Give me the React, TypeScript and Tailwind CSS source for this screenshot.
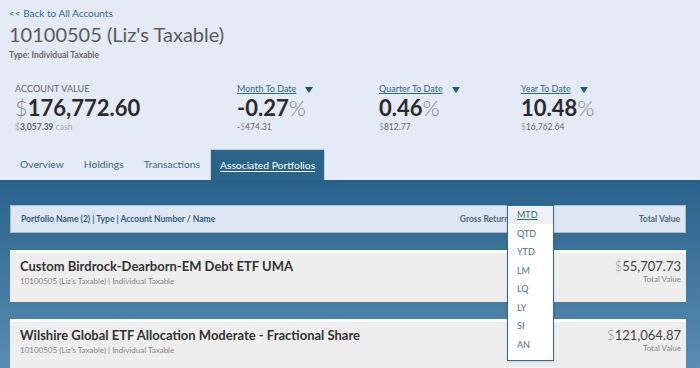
import { useState } from "react";

const periods = ["MTD", "QTD", "YTD", "LM", "LQ", "LY", "SI", "AN"];

const stats = [
  { label: "Month To Date", value: "-0.27", sub: "-$474.31" },
  { label: "Quarter To Date", value: "0.46", sub: "$812.77" },
  { label: "Year To Date", value: "10.48", sub: "$16,762.64" },
];

const portfolios = [
  { name: "Custom Birdrock-Dearborn-EM Debt ETF UMA", value: "55,707.73" },
  { name: "Wilshire Global ETF Allocation Moderate - Fractional Share", value: "121,064.87" },
];

function Caret() {
  return (
    <svg width="8" height="6" viewBox="0 0 8 6" className="ml-[9px] mt-[1px]">
      <path d="M0 0 H8 L4 6 Z" fill="#1f5677" />
    </svg>
  );
}

export default function App() {
  const [tab] = useState("Associated Portfolios");
  const tabs = ["Overview", "Holdings", "Transactions", "Associated Portfolios"];

  return (
    <div className="w-[700px] h-[368px] overflow-hidden bg-[#e4eaf6] font-['Lato',sans-serif] flex flex-col">
      {/* header */}
      <div className="px-[9px] pt-[7px]">
        <a className="text-[10px] text-[#2d6a8e] leading-[12px] block">&lt;&lt; Back to All Accounts</a>
        <h1 className="text-[20px] text-[#5b5b5b] leading-[24px] mt-[3px]">10100505 (Liz's Taxable)</h1>
        <div className="text-[8.5px] font-bold text-[#6b6b6b] mt-[4px] leading-[10px]">Type: Individual Taxable</div>
      </div>

      {/* stats */}
      <div className="flex mt-[24px] pl-[15px]">
        <div className="w-[222px]">
          <div className="text-[9px] text-[#666] leading-[10px] tracking-[0.1px]">ACCOUNT VALUE</div>
          <div className="text-[22px] leading-[26px] mt-[1px] text-[#2b2b2b]">
            <span className="font-light text-[#888]">$</span>
            <span className="font-bold">176,772.60</span>
          </div>
          <div className="text-[8.5px] mt-[1px] leading-[10px]">
            <span className="text-[#aaa]">$</span>
            <span className="font-bold text-[#666]">3,057.39</span>
            <span className="text-[#aaa]"> cash</span>
          </div>
        </div>
        {stats.map((s) => (
          <div key={s.label} className="w-[142px]">
            <div className="flex items-center leading-[10px]">
              <span className="text-[9px] text-[#2d6a8e] underline">{s.label}</span>
              <Caret />
            </div>
            <div className="text-[22px] leading-[26px] mt-[1px] text-[#2b2b2b]">
              <span className="font-bold">{s.value}</span>
              <span className="font-light text-[#888]">%</span>
            </div>
            <div className="text-[8.5px] mt-[1px] leading-[10px] text-[#666]">
              {s.sub.startsWith("-") ? (
                <>-<span className="text-[#aaa]">$</span>{s.sub.slice(2)}</>
              ) : (
                <><span className="text-[#aaa]">$</span>{s.sub.slice(1)}</>
              )}
            </div>
          </div>
        ))}
      </div>

      {/* tabs */}
      <div className="flex items-end mt-[17px] pl-[10px] h-[31px]">
        {tabs.map((t) => (
          <div
            key={t}
            className={
              t === tab
                ? "h-[31px] px-[9px] bg-[#2a6489] border-t border-x border-white/70 flex items-center text-[10.3px] text-white"
                : "h-[30px] px-[10px] flex items-center text-[10.3px] text-[#3e6780]"
            }
          >
            <span className={t === tab ? "border-b border-white leading-[12px]" : ""}>{t}</span>
          </div>
        ))}
      </div>

      {/* panel */}
      <div className="flex-1 bg-gradient-to-b from-[#28628a] to-[#5a8db3] px-[10px] pt-[25px] relative">
        <div className="mr-[4px] h-[28px] bg-[#dfe6f3] border border-[#aab9cc] flex items-center pl-[10px] pr-[5px] text-[8.5px] font-bold text-[#2c5f80]">
          <span className="flex-1">Portfolio Name (2) | Type | Account Number / Name</span>
          <span className="text-right text-[#4d6a80]">Gross Return</span>
          <span className="w-[171px] text-right text-[#4d6a80]">Total Value</span>
        </div>

        <div className="flex flex-col gap-[17px] mt-[17px]">
          {portfolios.map((p) => (
            <div key={p.name} className="mr-[4px] h-[52px] bg-[#eeeeee] border-t-[3px] border-white flex pl-[10px] pr-[5px] pt-[5px]">
              <div className="flex-1">
                <div className="text-[13px] font-bold text-[#333] leading-[16px]">{p.name}</div>
                <div className="text-[8px] text-[#888] leading-[10px] mt-[2px]">10100505 (Liz's Taxable) | Individual Taxable</div>
              </div>
              <div className="text-right">
                <div className="text-[13px] text-[#444] leading-[16px]">
                  <span className="text-[#999] font-light">$</span>
                  {p.value}
                </div>
                <div className="text-[8px] text-[#888] leading-[10px]">Total Value</div>
              </div>
            </div>
          ))}
        </div>

        {/* period dropdown */}
        <div className="absolute left-[507px] top-[25px] w-[47px] bg-white border border-[#2f6a90] shadow-sm">
          {periods.map((p, i) => (
            <div
              key={p}
              className={
                i === 0
                  ? "h-[18px] bg-[#eef0f3] pl-[9px] flex items-center text-[9px] text-[#2d6a8e] underline"
                  : "h-[18.5px] pl-[9px] flex items-center text-[9px] text-[#4b6e88]"
              }
            >
              {p}
            </div>
          ))}
          <div className="h-[6px]" />
        </div>
      </div>
    </div>
  );
}
